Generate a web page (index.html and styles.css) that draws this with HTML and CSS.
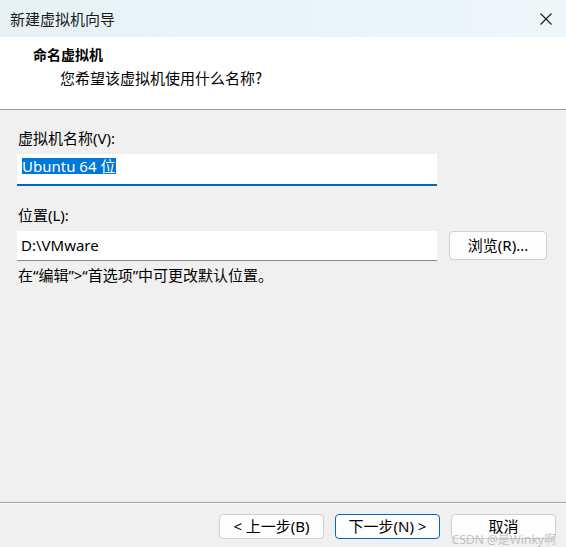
FILE: index.html
```html
<!DOCTYPE html>
<html lang="zh-CN">
<head>
    <meta charset="UTF-8">
    <title>新建虚拟机向导</title>
    <link rel="stylesheet" href="styles.css">
</head>
<body>
    <div class="window">
        <div class="titlebar">
            <span class="title">新建虚拟机向导</span>
            <svg class="close" width="12" height="12" viewBox="0 0 12 12">
                <path d="M0.5 0.5 L11.5 11.5 M11.5 0.5 L0.5 11.5" stroke="#1a1a1a" stroke-width="1.1" fill="none"/>
            </svg>
        </div>

        <div class="header">
            <div class="header-title">命名虚拟机</div>
            <div class="header-sub">您希望该虚拟机使用什么名称?</div>
        </div>

        <div class="content">
            <div class="label">虚拟机名称(V):</div>
            <div class="field focused">
                <span class="selected">Ubuntu 64 位</span>
            </div>

            <div class="label second">位置(L):</div>
            <div class="row">
                <div class="field">D:\VMware</div>
                <button class="btn browse">浏览(R)...</button>
            </div>
            <div class="hint">在“编辑”&gt;“首选项”中可更改默认位置。</div>
        </div>

        <div class="footer">
            <button class="btn">&lt; 上一步(B)</button>
            <button class="btn primary">下一步(N) &gt;</button>
            <button class="btn">取消</button>
            <span class="watermark">CSDN @是Winky啊</span>
        </div>
    </div>
</body>
</html>
```

FILE: styles.css
```css
body {
    margin: 0;
    font-family: "Segoe UI", "Noto Sans", "Noto Sans CJK SC", sans-serif;
    font-size: 15px;
    color: #000;
    background: #f0f0f0;
}
.window {
    width: 566px;
    height: 547px;
    display: flex;
    flex-direction: column;
    background: #f0f0f0;
    overflow: hidden;
}
.titlebar {
    height: 37px;
    flex: none;
    display: flex;
    align-items: center;
    justify-content: space-between;
    padding: 0 14px 0 10px;
    background: linear-gradient(90deg, #e6f2f6, #eef6fa);
}
.title {
    font-family: "Noto Sans CJK SC", sans-serif;
    font-size: 15px;
    color: #1a1a1a;
}
.header {
    flex: none;
    background: #fff;
    border-bottom: 1px solid #a0a0a0;
    padding: 7px 0 0 33px;
    box-sizing: border-box;
    height: 73px;
}
.header-title {
    font-family: "Noto Sans CJK SC", sans-serif;
    font-weight: 700;
    font-size: 14px;
    line-height: 20px;
}
.header-sub {
    font-family: "Noto Sans CJK SC", sans-serif;
    margin: 4px 0 0 27px;
    line-height: 20px;
}
.content {
    flex: 1;
    padding: 18px 19px 0 17px;
}
.label {
    line-height: 20px;
    padding-left: 1px;
    margin-bottom: 6px;
}
.label.second {
    margin-top: 19px;
}
.field {
    width: 420px;
    height: 30px;
    box-sizing: border-box;
    background: #fff;
    border-bottom: 1px solid #8a8a8a;
    padding: 0 0 2px 4px;
    line-height: 26px;
    display: flex;
    align-items: center;
}
.field.focused {
    height: 32px;
    border-bottom: 2px solid #0067c0;
    align-items: flex-start;
    padding: 4px 0 0 5px;
}
.selected {
    background: #0078d7;
    color: #fff;
    line-height: 16px;
    padding: 0 1px 0 0;
}
.row {
    display: flex;
    gap: 12px;
}
.btn {
    font-family: "Segoe UI", "Noto Sans", "Noto Sans CJK SC", sans-serif;
    font-size: 15px;
    color: #000;
    background: #fdfdfd;
    border: 1px solid #d0d0d0;
    border-radius: 4px;
    width: 105px;
    height: 25px;
    padding: 0;
    line-height: 23px;
}
.btn.browse {
    width: 98px;
    height: 29px;
}
.btn.primary {
    border-color: #0067c0;
}
.hint {
    margin-top: 4px;
    line-height: 20px;
    padding-left: 1px;
}
.footer {
    position: relative;
    flex: none;
    height: 45px;
    border-top: 1px solid #a0a0a0;
    box-shadow: inset 0 1px 0 #fafafa;
    display: flex;
    justify-content: flex-end;
    align-items: flex-start;
    gap: 11px;
    padding: 11px 10px 0 0;
    box-sizing: border-box;
}
.watermark {
    position: absolute;
    right: 10px;
    bottom: 1px;
    font-size: 12px;
    line-height: 13px;
    color: rgba(150, 150, 150, 0.55);
    font-family: "Noto Sans", "Noto Sans CJK SC", sans-serif;
}
```
